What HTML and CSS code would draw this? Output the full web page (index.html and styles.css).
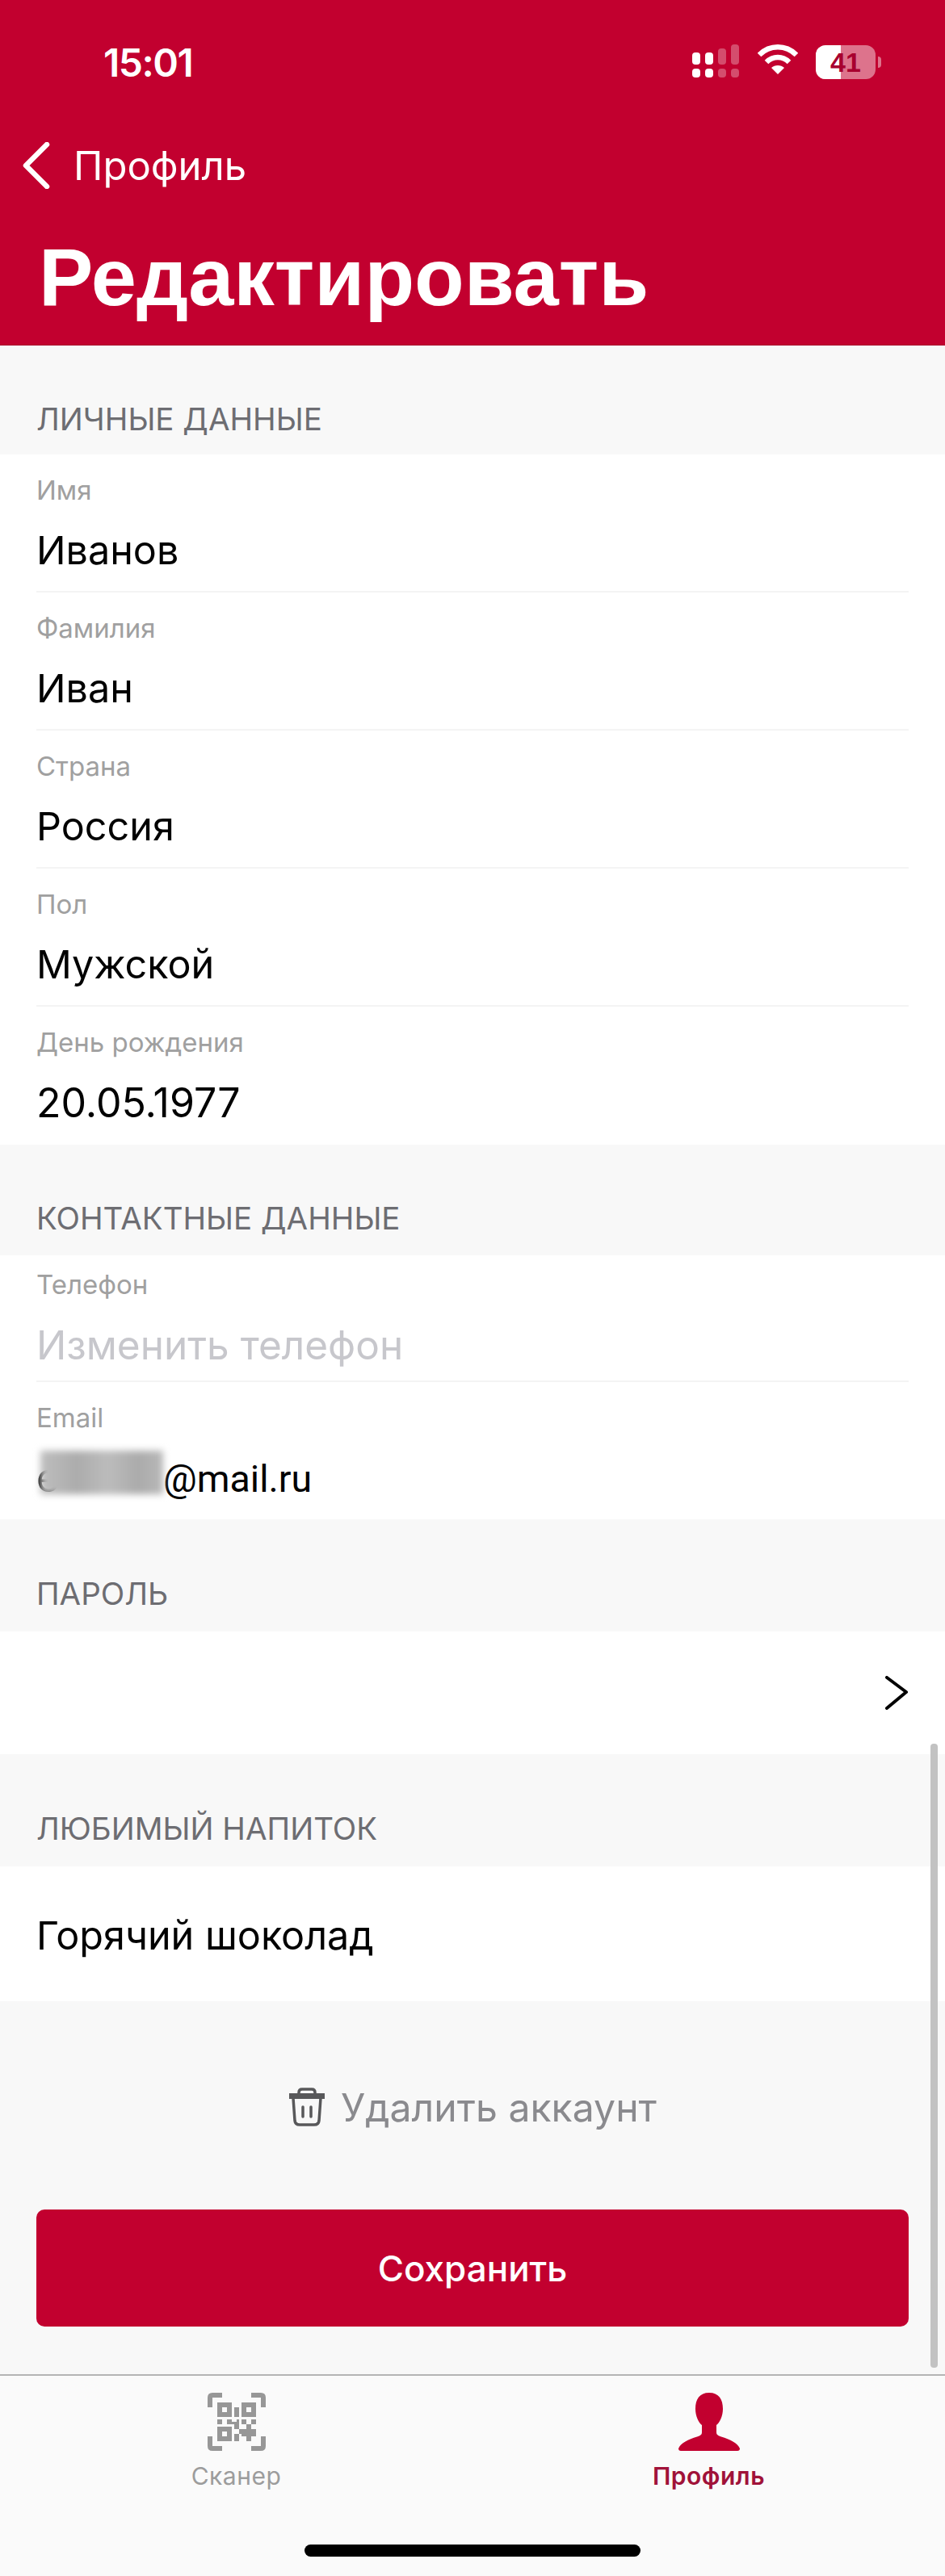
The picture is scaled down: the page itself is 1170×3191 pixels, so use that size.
FILE: index.html
```html
<!DOCTYPE html>
<html lang="ru">
<head>
    <meta charset="UTF-8">
    <meta name="viewport" content="width=device-width, initial-scale=1.0">
    <title>Редактировать</title>
    <link rel="stylesheet" href="styles.css">
</head>
<body>
    <div class="screen">
        <header class="top">
            <div class="status">
                <span class="time">15:01</span>
                <div class="status-icons">
                    <svg class="signal" width="59" height="42" viewBox="0 0 59 42" fill="#fff">
                        <rect x="0" y="10" width="10" height="15" rx="4"/>
                        <rect x="16" y="10" width="10" height="15" rx="4"/>
                        <rect x="32" y="5" width="10" height="20" rx="4" opacity=".3"/>
                        <rect x="48" y="0" width="10" height="25" rx="4" opacity=".3"/>
                        <rect x="0" y="30" width="10" height="11" rx="4"/>
                        <rect x="16" y="30" width="10" height="11" rx="4"/>
                        <rect x="32" y="30" width="10" height="11" rx="4" opacity=".3"/>
                        <rect x="48" y="30" width="10" height="11" rx="4" opacity=".3"/>
                    </svg>
                    <svg class="wifi" width="50" height="38" viewBox="0 0 50 38" fill="none" stroke="#fff" stroke-width="6.5">
                        <path d="M2 13 C15 0 35 0 48 13"/>
                        <path d="M11 22 C19 14 31 14 39 22"/>
                        <path d="M25 37 L17 29 C21 25 29 25 33 29 Z" fill="#fff" stroke="none"/>
                    </svg>
                    <div class="battery">
                        <div class="battery-body">
                            <div class="battery-fill"></div>
                            <span class="battery-text">41</span>
                        </div>
                        <div class="battery-nub"></div>
                    </div>
                </div>
            </div>
            <a class="back" href="#">
                <svg width="34" height="58" viewBox="0 0 34 58" fill="none" stroke="#fff" stroke-width="6.5" stroke-linecap="round" stroke-linejoin="round">
                    <path d="M30 3 L4 29 L30 55"/>
                </svg>
                <span>Профиль</span>
            </a>
            <h1>Редактировать</h1>
        </header>

        <main class="content">
            <h2 class="section-title section-first">ЛИЧНЫЕ ДАННЫЕ</h2>
            <div class="group">
                <div class="field">
                    <div class="field-label">Имя</div>
                    <div class="field-value">Иванов</div>
                </div>
                <div class="field">
                    <div class="field-label">Фамилия</div>
                    <div class="field-value">Иван</div>
                </div>
                <div class="field">
                    <div class="field-label">Страна</div>
                    <div class="field-value">Россия</div>
                </div>
                <div class="field">
                    <div class="field-label">Пол</div>
                    <div class="field-value">Мужской</div>
                </div>
                <div class="field field-last">
                    <div class="field-label">День рождения</div>
                    <div class="field-value date">20.05.1977</div>
                </div>
            </div>

            <h2 class="section-title">КОНТАКТНЫЕ ДАННЫЕ</h2>
            <div class="group">
                <div class="field field-first">
                    <div class="field-label">Телефон</div>
                    <div class="field-value placeholder">Изменить телефон</div>
                </div>
                <div class="field field-last field-mail">
                    <div class="field-label">Email</div>
                    <div class="field-value"><span class="hidden-mail">e</span><span class="mail">@mail.ru</span></div>
                </div>
            </div>

            <h2 class="section-title section-wide">ПАРОЛЬ</h2>
            <div class="group row-password">
                <svg width="30" height="42" viewBox="0 0 30 42" fill="none" stroke="#000" stroke-width="4" stroke-linecap="round" stroke-linejoin="round">
                    <path d="M3 2 L27 20 L3 40"/>
                </svg>
            </div>

            <h2 class="section-title section-wide">ЛЮБИМЫЙ НАПИТОК</h2>
            <div class="group row-drink">Горячий шоколад</div>

            <a class="delete" href="#">
                <svg width="46" height="48" viewBox="0 0 46 48" fill="none" stroke="#58585a" stroke-width="3.5" stroke-linecap="round" stroke-linejoin="round">
                    <path d="M1 10.5 H45" stroke-width="7" stroke-linecap="butt"/>
                    <path d="M13 9 V6 Q13 2 17 2 H29 Q33 2 33 6 V9"/>
                    <path d="M6 13 L8 41 Q8.500 46 14 46 H32 Q37.500 46 38 41 L40 13"/>
                    <path d="M18 24 V36 M28 24 V36"/>
                </svg>
                <span>Удалить аккаунт</span>
            </a>

            <button class="save">Сохранить</button>
        </main>

        <div class="scrollbar"></div>

        <nav class="tabs">
            <a class="tab" href="#">
                <svg width="72" height="72" viewBox="0 0 72 72" fill="#979797">
                    <path d="M0 18 V6 Q0 0 6 0 H18 V6 H6 V18 Z"/>
                    <path d="M54 0 H66 Q72 0 72 6 V18 H66 V6 H54 Z"/>
                    <path d="M0 54 H6 V66 H18 V72 H6 Q0 72 0 66 Z"/>
                    <path d="M66 54 H72 V66 Q72 72 66 72 H54 V66 H66 Z"/>
                    <path fill-rule="evenodd" d="M12 12 H30 V30 H12 Z M18 18 V24 H24 V18 Z"/>
                    <path fill-rule="evenodd" d="M42 12 H60 V30 H42 Z M48 18 V24 H54 V18 Z"/>
                    <path d="M33 18 H39 V30 H33 Z"/>
                    <path d="M12 33 H18 V39 H12 Z M24 33 H30 V39 H24 Z M27 36 H36 V33 H39 V45 H33 V39 H27 Z M42 33 H48 V39 H42 Z M54 33 H60 V39 H54 Z"/>
                    <path fill-rule="evenodd" d="M12 42 H30 V60 H12 Z M18 48 V54 H24 V48 Z"/>
                    <path d="M48 39 H54 V45 H60 V54 H54 V60 H48 V54 H42 V51 H39 V60 H33 V51 H39 V45 H48 Z"/>
                </svg>
                <span class="tab-label">Сканер</span>
            </a>
            <a class="tab tab-active" href="#">
                <svg width="76" height="72" viewBox="0 0 76 72" fill="#c2002f">
                    <path d="M38 0 C50 0 55 8 55 20 C55 29 51 37 47 40 V49 C47 52 49 53 53 54.500 C64 58 73 62 76 69 C76 71 75 72 73 72 H3 C1 72 0 71 0 69 C3 62 12 58 23 54.500 C27 53 29 52 29 49 V40 C25 37 21 29 21 20 C21 8 26 0 38 0 Z"/>
                </svg>
                <span class="tab-label">Профиль</span>
            </a>
            <div class="home-bar"></div>
        </nav>
    </div>
</body>
</html>
```

FILE: styles.css
```css
/* Layout */
* {
    box-sizing: border-box;
}
body {
    margin: 0;
    font-family: Inter, "Liberation Sans", sans-serif;
    background-color: #F8F8F8;
    color: #000;
}
a {
    text-decoration: none;
    color: inherit;
}
.screen {
    position: relative;
    width: 1170px;
    height: 3191px;
    display: flex;
    flex-direction: column;
    overflow: hidden;
}

/* Red header */
.top {
    height: 428px;
    background-color: #C2002F;
    color: white;
    padding-top: 48px;
    border-bottom: 1px solid #A8002A;
}
.status {
    height: 58px;
    display: flex;
    justify-content: space-between;
    align-items: center;
    padding: 0 79px 0 128px;
}
.time {
    font-size: 48px;
    font-weight: 600;
    letter-spacing: -1.5px;
}
.status-icons {
    display: flex;
    align-items: center;
    gap: 22px;
}
.signal {
    margin-top: -2px;
}
.wifi {
    margin-top: -6px;
}
.battery {
    display: flex;
    align-items: center;
    gap: 3px;
}
.battery-body {
    position: relative;
    width: 74px;
    height: 42px;
    border-radius: 12px;
    overflow: hidden;
    background-color: rgba(255, 255, 255, 0.45);
}
.battery-fill {
    width: 31px;
    height: 100%;
    background-color: white;
}
.battery-text {
    position: absolute;
    top: 0;
    left: 0;
    width: 100%;
    line-height: 42px;
    text-align: center;
    font-family: "Liberation Sans", sans-serif;
    font-size: 34px;
    font-weight: 700;
    color: #A8002F;
}
.battery-nub {
    width: 4px;
    height: 14px;
    border-radius: 0 4px 4px 0;
    background-color: rgba(255, 255, 255, 0.45);
}
.back {
    display: flex;
    align-items: center;
    gap: 29px;
    height: 58px;
    margin-top: 70px;
    padding-left: 28px;
    font-size: 49px;
}
h1 {
    margin: 54px 0 0;
    padding-left: 48px;
    font-family: "Liberation Sans", sans-serif;
    font-size: 101px;
    line-height: 110px;
    font-weight: 700;
}

/* Form */
.content {
    flex: 1;
    display: flex;
    flex-direction: column;
}
.section-title {
    height: 137px;
    margin: 0;
    padding: 68px 45px 0;
    font-size: 38.5px;
    line-height: 46px;
    font-weight: 400;
    color: #6D6D72;
}
.section-first {
    height: 135px;
}
.section-wide {
    height: 139px;
    padding-top: 69px;
}
.group {
    background-color: white;
}
.field {
    height: 171px;
    margin: 0 45px;
    padding-top: 26px;
    border-bottom: 2px solid #F4F4F4;
}
.field-first {
    height: 157px;
    padding-top: 18px;
}
.field-last {
    border-bottom-color: white;
}
.field-mail {
    height: 170px;
}
.field-label {
    font-size: 33px;
    line-height: 36px;
    color: #A0A0A0;
}
.field-value {
    margin-top: 27px;
    font-size: 48.5px;
    line-height: 60px;
}
.date {
    font-size: 50px;
}
.placeholder {
    font-size: 49.5px;
    color: #C7C7CC;
}
.mail {
    font-family: Roboto, sans-serif;
    font-size: 46.5px;
}
.hidden-mail {
    position: relative;
    display: inline-block;
    width: 157px;
}
.hidden-mail::after {
    content: "";
    position: absolute;
    top: -4px;
    left: 5px;
    width: 152px;
    height: 54px;
    background: linear-gradient(90deg, #BEBEBE, #ACACAC 30%, #BCBCBC 55%, #ABABAB 80%, #B8B8B8);
    filter: blur(4px);
}
.row-password {
    height: 152px;
    display: flex;
    justify-content: flex-end;
    align-items: center;
    padding-right: 45px;
}
.row-drink {
    height: 167px;
    padding: 4px 45px 0;
    display: flex;
    align-items: center;
    font-size: 48.5px;
}
.delete {
    display: flex;
    justify-content: center;
    align-items: center;
    gap: 19px;
    margin-top: 106px;
    height: 50px;
    font-size: 48.2px;
    color: #8A8A8E;
}
.save {
    display: block;
    height: 145px;
    margin: 102px 45px 0;
    border: none;
    border-radius: 10px;
    background-color: #C2002F;
    color: white;
    font-family: inherit;
    font-size: 44px;
    font-weight: 500;
}
.scrollbar {
    position: absolute;
    left: 1152px;
    top: 2160px;
    width: 9px;
    height: 773px;
    border-radius: 4px;
    background-color: #C2C2C2;
}

/* Bottom tabs */
.tabs {
    position: relative;
    height: 250px;
    display: flex;
    background-color: #FAFAFA;
    border-top: 2px solid #B5B5B5;
}
.tab {
    flex: 1;
    display: flex;
    flex-direction: column;
    align-items: center;
    padding-top: 21px;
}
.tab-label {
    margin-top: 11px;
    font-size: 30px;
    line-height: 40px;
    letter-spacing: 0.5px;
    color: #9C9C9C;
}
.tab-active .tab-label {
    font-weight: 600;
    color: #A01239;
}
.home-bar {
    position: absolute;
    left: 377px;
    top: 209px;
    width: 416px;
    height: 15px;
    border-radius: 8px;
    background-color: #000;
}
```
